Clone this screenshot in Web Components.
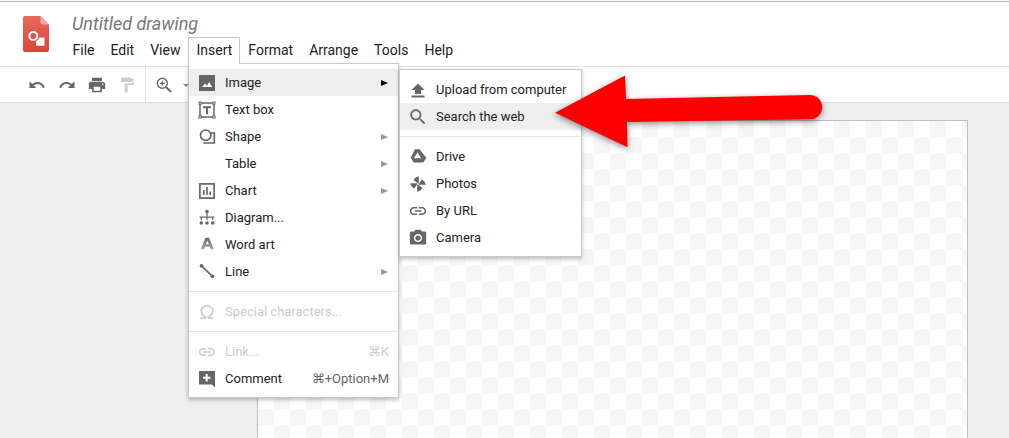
<!DOCTYPE html>
<html lang="en">
<head>
<meta charset="utf-8">
<title>Untitled drawing</title>
<style>
  html, body { margin: 0; height: 100%; overflow: hidden; background: #fff; }
  body { font: 13px Roboto, "Liberation Sans", "DejaVu Sans", sans-serif; color: #222; position: relative; }
</style>
</head>
<body>
<gd-app>
  <gd-header slot="header" doc-title="Untitled drawing">
    <gd-tab>File</gd-tab>
    <gd-tab>Edit</gd-tab>
    <gd-tab>View</gd-tab>
    <gd-tab open>Insert</gd-tab>
    <gd-tab>Format</gd-tab>
    <gd-tab>Arrange</gd-tab>
    <gd-tab>Tools</gd-tab>
    <gd-tab>Help</gd-tab>
  </gd-header>
  <gd-toolbar slot="toolbar"></gd-toolbar>
  <gd-workspace slot="workspace"></gd-workspace>

  <gd-menu style="--left:188px; --top:63px; --width:209px; --pad-top:5px">
    <gd-item icon="image" arrow active>Image</gd-item>
    <gd-item icon="textbox">Text box</gd-item>
    <gd-item icon="shape" arrow>Shape</gd-item>
    <gd-item arrow>Table</gd-item>
    <gd-item icon="chart" arrow>Chart</gd-item>
    <gd-item icon="diagram">Diagram...</gd-item>
    <gd-item icon="wordart">Word art</gd-item>
    <gd-item icon="line" arrow>Line</gd-item>
    <gd-sep></gd-sep>
    <gd-item icon="omega" disabled>Special characters...</gd-item>
    <gd-sep></gd-sep>
    <gd-item icon="link" disabled shortcut="⌘K">Link...</gd-item>
    <gd-item icon="comment" shortcut="⌘+Option+M">Comment</gd-item>
  </gd-menu>

  <gd-menu style="--left:399px; --top:69px; --width:181px; --pad-top:6px">
    <gd-item icon="upload">Upload from computer</gd-item>
    <gd-item icon="search" active>Search the web</gd-item>
    <gd-sep></gd-sep>
    <gd-item icon="drive">Drive</gd-item>
    <gd-item icon="photos">Photos</gd-item>
    <gd-item icon="link">By URL</gd-item>
    <gd-item icon="camera">Camera</gd-item>
  </gd-menu>

  <gd-arrow></gd-arrow>
</gd-app>

<script>
  const BLADE = 'M9.8 1.300v7.400L4.600 5.300C5.600 3.200 7.500 1.700 9.800 1.300z';

  const ICONS = {
    image: '<rect x="1" y="1" width="16" height="16" fill="currentColor"/><path d="M4 13l3-3.500 2 2 2.200-3.500 3 5z" fill="#fff"/>',
    textbox: '<g fill="none" stroke="currentColor" stroke-width="1.500"><rect x="2" y="2" width="14" height="14"/><path d="M5 6.200h8M9 6.200v7" stroke-width="2"/><rect x="1" y="1" width="2.200" height="2.200" fill="#fff" stroke-width="1"/><rect x="14.800" y="1" width="2.200" height="2.200" fill="#fff" stroke-width="1"/><rect x="1" y="14.800" width="2.200" height="2.200" fill="#fff" stroke-width="1"/><rect x="14.800" y="14.800" width="2.200" height="2.200" fill="#fff" stroke-width="1"/></g>',
    shape: '<g fill="none" stroke="currentColor" stroke-width="1.700"><circle cx="7.700" cy="7.200" r="5.200"/><path d="M12.600 5h3.700v10H5.300"/></g>',
    chart: '<rect x="1.900" y="1.900" width="14.200" height="14.200" fill="none" stroke="currentColor" stroke-width="1.700"/><path d="M5 8h1.600v5H5zM8.200 5h1.600v8H8.200zM11.400 9.500H13V13h-1.600z" fill="currentColor"/>',
    diagram: '<g fill="currentColor"><circle cx="9" cy="2.600" r="1.800"/><circle cx="3.300" cy="14" r="1.800"/><circle cx="9" cy="14" r="1.800"/><circle cx="14.700" cy="14" r="1.800"/><path d="M1.600 7.600h14.800v1.200H1.600zM8.400 4h1.200v4H8.400z"/><path d="M2.700 8h1.200v3H2.700zM8.400 8h1.200v3H8.400zM14.100 8h1.200v3h-1.200z"/></g>',
    wordart: '<defs><linearGradient id="wa" x1="0" x2="0" y1="0" y2="1"><stop offset="0" stop-color="#666"/><stop offset="1" stop-color="#aaa"/></linearGradient></defs><path fill="url(#wa)" fill-rule="evenodd" d="M2.700 13.300L7.500 1.700H11L16 13.300h-3.500l-.8-2.500H7l-.8 2.500zM7.900 8.300h3L9.400 4.500z"/>',
    line: '<path d="M3.500 2.800l11 10.500" stroke="currentColor" stroke-width="1.600"/><circle cx="3.500" cy="2.800" r="1.900" fill="currentColor"/><circle cx="14.500" cy="13.300" r="1.900" fill="currentColor"/>',
    omega: '<path d="M2.500 15.200h5v-1.500C5.300 12.800 3.200 11 3.200 8.100 3.200 5 5.800 2.800 9 2.800s5.800 2.200 5.800 5.300c0 2.900-2.100 4.700-4.300 5.600v1.500h5" fill="none" stroke="currentColor" stroke-width="1.700"/>',
    link: '<svg viewBox="1 1 22 22" x="0" y="0" width="18" height="18"><path fill="currentColor" d="M3.900 12c0-1.710 1.390-3.100 3.100-3.100h4V7H7c-2.760 0-5 2.240-5 5s2.240 5 5 5h4v-1.900H7c-1.710 0-3.100-1.390-3.100-3.100zM8 13h8v-2H8v2zm9-6h-4v1.900h4c1.710 0 3.100 1.390 3.100 3.100s-1.390 3.100-3.100 3.100h-4V17h4c2.760 0 5-2.240 5-5s-2.240-5-5-5z"/></svg>',
    comment: '<path fill="currentColor" d="M1 1h16v16.500l-3.200-2.900H1z"/><path d="M5 7.800h7.500M8.700 4v7.500" stroke="#fff" stroke-width="2"/>',
    upload: '<path fill="currentColor" d="M9 2.500l6.500 6.500H12v4H6V9H2.500zM2.500 14.500h13v2h-13z"/>',
    search: '<svg viewBox="1.500 1.500 21 21" x="0" y="0" width="18" height="18"><path fill="currentColor" d="M15.500 14h-.79l-.28-.27C15.410 12.590 16 11.110 16 9.500 16 5.910 13.090 3 9.500 3S3 5.910 3 9.500 5.910 16 9.500 16c1.610 0 3.090-.59 4.230-1.570l.27.28v.79l5 4.990L20.490 19l-4.990-5zm-6 0C7.010 14 5 11.990 5 9.500S7.010 5 9.500 5 14 7.010 14 9.500 11.990 14 9.500 14z"/></svg>',
    drive: '<path fill="#666" fill-rule="evenodd" d="M6 1.300h4.500l6.800 8.400-3 4.700H4.700l-3-4.700zM8.500 4.500L4.900 10.200h7.400z"/>',
    photos: `<g fill="currentColor"><path d="${BLADE}"/><path transform="rotate(90 9 9)" d="${BLADE}"/><path transform="rotate(180 9 9)" d="${BLADE}"/><path transform="rotate(270 9 9)" d="${BLADE}"/></g>`,
    camera: '<svg viewBox="1 1 22 22" x="0" y="0" width="18" height="18"><circle cx="12" cy="12" r="3.200" fill="currentColor"/><path fill="currentColor" d="M9 2L7.170 4H4c-1.100 0-2 .9-2 2v12c0 1.100.9 2 2 2h16c1.100 0 2-.9 2-2V6c0-1.100-.9-2-2-2h-3.170L15 2H9zm3 15c-2.760 0-5-2.240-5-5s2.240-5 5-5 5 2.240 5 5-2.240 5-5 5z"/></svg>',
    undo: '<svg viewBox="0 0 24 24" x="0" y="0" width="18" height="18"><path fill="currentColor" d="M12.500 8c-2.650 0-5.050.99-6.900 2.600L2 7v9h9l-3.620-3.620c1.390-1.160 3.160-1.880 5.120-1.880 3.540 0 6.550 2.310 7.600 5.500l2.370-.78C21.080 11.030 17.150 8 12.500 8z"/></svg>',
    redo: '<svg viewBox="0 0 24 24" x="0" y="0" width="18" height="18"><path fill="currentColor" d="M18.400 10.600C16.550 8.990 14.150 8 11.500 8c-4.650 0-8.580 3.030-9.960 7.220L3.900 16c1.050-3.190 4.050-5.500 7.600-5.500 1.950 0 3.730.72 5.120 1.880L13 16h9V7l-3.600 3.600z"/></svg>',
    print: '<svg viewBox="1 1 22 22" x="0" y="0" width="18" height="18"><path fill="currentColor" d="M19 8H5c-1.660 0-3 1.340-3 3v6h4v4h12v-4h4v-6c0-1.660-1.340-3-3-3zm-3 11H8v-5h8v5zm3-7c-.55 0-1-.45-1-1s.45-1 1-1 1 .45 1 1-.45 1-1 1zm-1-9H6v4h12V3z"/></svg>',
    paint: '<svg viewBox="0 0 24 24" x="0" y="0" width="18" height="18"><path fill="currentColor" d="M18 4V3c0-.55-.45-1-1-1H5c-.55 0-1 .45-1 1v4c0 .55.45 1 1 1h12c.55 0 1-.45 1-1V6h1v4H9v11c0 .55.45 1 1 1h2c.55 0 1-.45 1-1v-9h8V4h-3z"/></svg>',
    zoom: '<circle cx="7.300" cy="7.300" r="5" fill="none" stroke="currentColor" stroke-width="1.400"/><path d="M11 11l5 5" stroke="currentColor" stroke-width="2"/><path d="M4.800 7.300h5M7.300 4.800v5" stroke="currentColor" stroke-width="1.200"/>'
  };

  class GdIcon extends HTMLElement {
    connectedCallback() {
      const name = this.getAttribute('name');
      const root = this.shadowRoot || this.attachShadow({ mode: 'open' });
      root.innerHTML = `
        <style>
          :host { display: block; width: 18px; height: 18px; flex: none; }
          svg { display: block; width: 18px; height: 18px; }
        </style>
        <svg viewBox="0 0 18 18">${ICONS[name] || ''}</svg>
      `;
    }
  }

  class GdApp extends HTMLElement {
    constructor() {
      super();
      this.attachShadow({ mode: 'open' }).innerHTML = `
        <style>
          :host { display: flex; flex-direction: column; height: 438px; overflow: hidden; }
          .top-line { height: 1px; margin-top: 1px; background: #b5b5b5; flex: none; }
        </style>
        <div class="top-line"></div>
        <slot name="header"></slot>
        <slot name="toolbar"></slot>
        <slot name="workspace"></slot>
        <slot></slot>
      `;
    }
  }

  class GdHeader extends HTMLElement {
    connectedCallback() {
      this.shadowRoot.querySelector('.doc-title').textContent = this.getAttribute('doc-title');
    }

    constructor() {
      super();
      this.attachShadow({ mode: 'open' }).innerHTML = `
        <style>
          :host { display: flex; height: 64px; box-sizing: content-box; border-bottom: 1px solid #e2e2e2; background: #fff; flex: none; }
          .logo { width: 26px; height: 36px; margin: 14px 15px 0 23px; flex: none; }
          .doc-title { font: italic 18px/22px Roboto, "Liberation Sans", sans-serif; color: #777; padding: 11px 0 0 8px; }
          .tabs { display: flex; margin-top: 2px; }
        </style>
        <svg class="logo" viewBox="0 0 26 36">
          <defs><linearGradient id="lg" x1="0" x2="0" y1="0" y2="1"><stop offset="0" stop-color="#e8695d"/><stop offset="1" stop-color="#db4437"/></linearGradient></defs>
          <path d="M2 0h15.500L26 8.500V34a2 2 0 0 1-2 2H2a2 2 0 0 1-2-2V2a2 2 0 0 1 2-2z" fill="url(#lg)"/>
          <path d="M17.500 0L26 8.500h-6.500a2 2 0 0 1-2-2z" fill="#f1a9a0"/>
          <circle cx="10.300" cy="20" r="4" fill="none" stroke="#fff" stroke-width="2"/>
          <path d="M16.500 21.500h5v8.200H13V25a5.500 5.500 0 0 0 3.500-3.500z" fill="#fff"/>
        </svg>
        <div>
          <div class="doc-title"></div>
          <div class="tabs"><slot></slot></div>
        </div>
      `;
    }
  }

  class GdTab extends HTMLElement {
    constructor() {
      super();
      this.attachShadow({ mode: 'open' }).innerHTML = `
        <style>
          :host { display: block; height: 25px; padding: 0 7px; border: 1px solid transparent; border-bottom: 0; font: 14px/24px Roboto, "Liberation Sans", sans-serif; color: #222; }
          :host(:first-child) { padding-left: 7.5px; }
          :host([open]) { height: 26px; border-color: #c8c8c8; background: #fff; position: relative; z-index: 5; }
        </style>
        <slot></slot>
      `;
    }
  }

  class GdToolbar extends HTMLElement {
    constructor() {
      super();
      this.attachShadow({ mode: 'open' }).innerHTML = `
        <style>
          :host { display: flex; align-items: center; height: 35px; padding-left: 22px; border-bottom: 1px solid #dcdcdc; background: #fff; flex: none; color: #666; }
          .btn { width: 30px; display: flex; justify-content: center; }
          .faint { color: #ccc; }
          .sep { align-self: stretch; width: 1px; background: #e2e2e2; margin: 0 3px; }
          .caret { width: 0; height: 0; margin: 2px 0 0 4px; border: 3px solid transparent; border-top: 3px solid #888; border-bottom: 0; }
        </style>
        <div class="btn"><gd-icon name="undo"></gd-icon></div>
        <div class="btn"><gd-icon name="redo"></gd-icon></div>
        <div class="btn"><gd-icon name="print"></gd-icon></div>
        <div class="btn faint"><gd-icon name="paint"></gd-icon></div>
        <div class="sep"></div>
        <div class="btn"><gd-icon name="zoom"></gd-icon></div>
        <div class="caret"></div>
      `;
    }
  }

  class GdWorkspace extends HTMLElement {
    constructor() {
      super();
      this.attachShadow({ mode: 'open' }).innerHTML = `
        <style>
          :host { display: block; flex: 1; min-height: 0; overflow: hidden; background: #eee; padding: 17px 0 0 257px; }
          .canvas {
            width: 709px; height: 600px; border: 1px solid #c0c0c0;
            background-color: #fff;
            background-image: conic-gradient(#fff 25%, #f6f6f6 0 50%, #fff 0 75%, #f6f6f6 0);
            background-size: 32px 32px;
          }
        </style>
        <div class="canvas"></div>
      `;
    }
  }

  class GdMenu extends HTMLElement {
    constructor() {
      super();
      this.attachShadow({ mode: 'open' }).innerHTML = `
        <style>
          :host {
            position: absolute; left: var(--left); top: var(--top); width: var(--width); z-index: 4;
            display: block; padding: var(--pad-top) 0 5px; background: #fff; border: 1px solid #cacaca;
            box-shadow: 0 2px 4px rgba(0,0,0,.25);
          }
        </style>
        <slot></slot>
      `;
    }
  }

  class GdItem extends HTMLElement {
    connectedCallback() {
      const icon = this.getAttribute('icon');
      const shortcut = this.getAttribute('shortcut');
      this.shadowRoot.querySelector('.icon').innerHTML = icon ? `<gd-icon name="${icon}"></gd-icon>` : '';
      this.shadowRoot.querySelector('.shortcut').textContent = shortcut || '';
    }

    constructor() {
      super();
      this.attachShadow({ mode: 'open' }).innerHTML = `
        <style>
          :host { display: flex; align-items: center; height: 27px; padding: 0 9px; font: 13px/27px Roboto, "Liberation Sans", sans-serif; color: #222; }
          :host([active]) { background: #eee; }
          :host([disabled]) { color: #ccc; }
          .icon { width: 18px; height: 18px; margin-right: 9px; color: #666; flex: none; }
          :host([disabled]) .icon { color: #ccc; }
          .label { flex: 1; white-space: nowrap; }
          .shortcut { color: #666; font-family: Roboto, "DejaVu Sans", sans-serif; white-space: nowrap; }
          :host([disabled]) .shortcut { color: #ccc; }
          .more { display: none; width: 0; height: 0; margin-right: 1px; border: 3.5px solid transparent; border-left: 7px solid #999; border-right: 0; }
          :host([arrow]) .more { display: block; }
          :host([arrow][active]) .more { border-left-color: #000; }
        </style>
        <div class="icon"></div>
        <div class="label"><slot></slot></div>
        <div class="shortcut"></div>
        <div class="more"></div>
      `;
    }
  }

  class GdSep extends HTMLElement {
    constructor() {
      super();
      this.attachShadow({ mode: 'open' }).innerHTML = `
        <style>
          :host { display: block; height: 1px; margin: 6px 0; background: #e6e6e6; }
        </style>
      `;
    }
  }

  class GdArrow extends HTMLElement {
    constructor() {
      super();
      this.attachShadow({ mode: 'open' }).innerHTML = `
        <style>
          :host { position: absolute; left: 545px; top: 65px; width: 290px; height: 95px; z-index: 6; }
          svg { display: block; overflow: visible; filter: drop-shadow(0 2px 3px rgba(0,0,0,.45)); }
        </style>
        <svg width="290" height="95" viewBox="545 65 290 95">
          <path fill="#f00" d="M555 112.700L625 75.500 626 99 810 95A12.150 12.150 0 0 1 810 119.300L627 122 627.500 147.300z"/>
        </svg>
      `;
    }
  }

  customElements.define('gd-icon', GdIcon);
  customElements.define('gd-app', GdApp);
  customElements.define('gd-header', GdHeader);
  customElements.define('gd-tab', GdTab);
  customElements.define('gd-toolbar', GdToolbar);
  customElements.define('gd-workspace', GdWorkspace);
  customElements.define('gd-menu', GdMenu);
  customElements.define('gd-item', GdItem);
  customElements.define('gd-sep', GdSep);
  customElements.define('gd-arrow', GdArrow);
</script>
</body>
</html>
